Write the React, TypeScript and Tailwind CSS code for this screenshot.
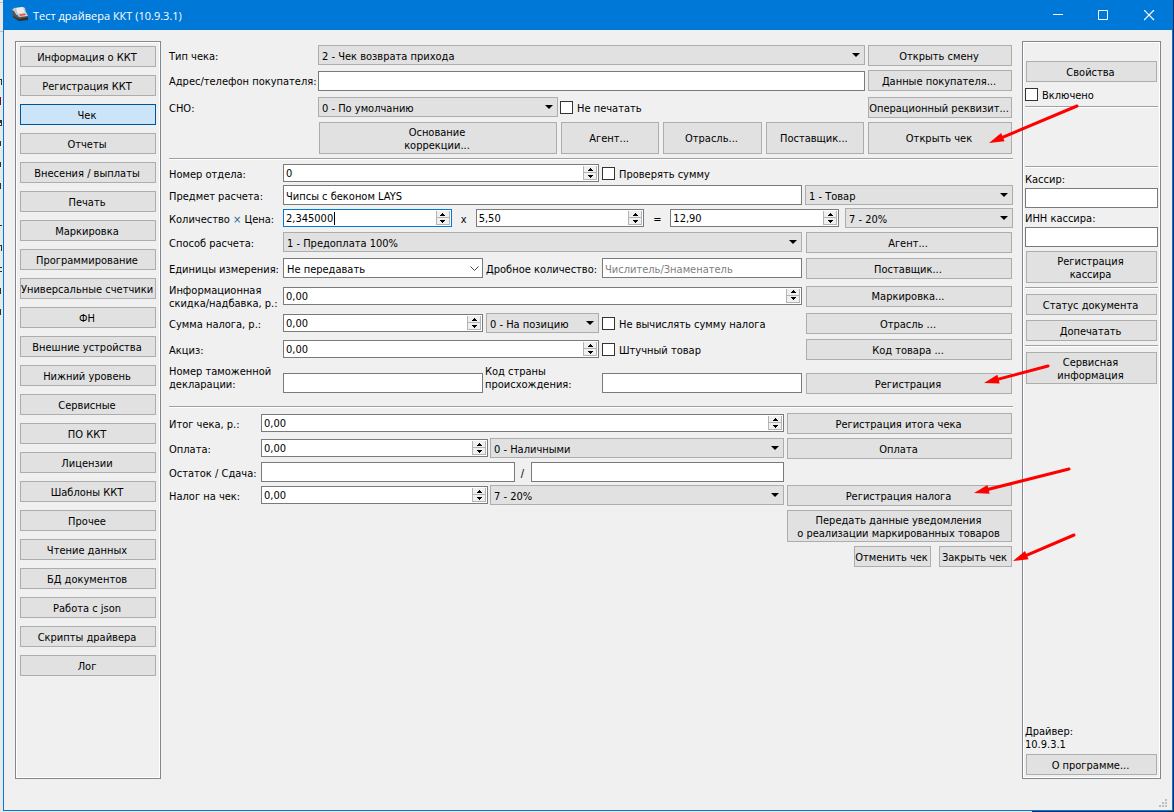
import { useId, useState } from "react";
import type { ReactNode } from "react";
import clsx from "clsx";

const sections = [
  "Информация о ККТ",
  "Регистрация ККТ",
  "Чек",
  "Отчеты",
  "Внесения / выплаты",
  "Печать",
  "Маркировка",
  "Программирование",
  "Универсальные счетчики",
  "ФН",
  "Внешние устройства",
  "Нижний уровень",
  "Сервисные",
  "ПО ККТ",
  "Лицензии",
  "Шаблоны ККТ",
  "Прочее",
  "Чтение данных",
  "БД документов",
  "Работа с json",
  "Скрипты драйвера",
  "Лог",
];

function Button({
  children,
  className,
  active,
  onClick,
}: {
  children: ReactNode;
  className?: string;
  active?: boolean;
  onClick?: () => void;
}) {
  return (
    <button
      type="button"
      onClick={onClick}
      className={clsx(
        "flex min-h-[21px] shrink-0 items-center justify-center border pt-px pr-0.5 text-center whitespace-nowrap",
        active
          ? "border-[#005499] bg-[#cce4f7]"
          : "border-[#adadad] bg-[#e1e1e1]",
        className,
      )}
    >
      {children}
    </button>
  );
}

function TextField({
  id,
  label,
  placeholder,
  value,
  className,
}: {
  id?: string;
  label?: string;
  placeholder?: string;
  value?: string;
  className?: string;
}) {
  return (
    <input
      id={id}
      type="text"
      aria-label={label}
      placeholder={placeholder}
      defaultValue={value}
      className={clsx(
        "h-5 min-w-0 border border-[#7a7a7a] bg-white px-0.5 pt-0.5 outline-none placeholder:text-[#808080]",
        className,
      )}
    />
  );
}

function Spin({
  id,
  label,
  value,
  className,
  focused,
}: {
  id?: string;
  label?: string;
  value: string;
  className?: string;
  focused?: boolean;
}) {
  return (
    <div
      className={clsx(
        "relative mt-px mb-0.5 flex h-[18px] min-w-0 border bg-white",
        focused ? "border-[#0078d7]" : "border-[#7a7a7a]",
        className,
      )}
    >
      <input
        id={id}
        type="text"
        aria-label={label}
        defaultValue={value}
        className="w-0 min-w-0 flex-1 bg-transparent px-0.5 pt-px outline-none"
      />
      {focused && (
        <span className="absolute top-0.5 left-[50px] h-[13px] w-px bg-black" />
      )}
      <div className="my-px mr-px flex w-[14px] flex-col border-r border-l border-[#b4b4b4] bg-[#f0f0f0]">
        <button
          type="button"
          aria-label="Больше"
          className="flex flex-1 items-center justify-center border-b border-[#b4b4b4]"
        >
          <svg width="5" height="3" shapeRendering="crispEdges">
            <path d="M2 0h1v1h1v1h1v1H0V2h1V1h1z" />
          </svg>
        </button>
        <button
          type="button"
          aria-label="Меньше"
          className="flex flex-1 items-center justify-center border-b border-[#b4b4b4]"
        >
          <svg width="5" height="3" shapeRendering="crispEdges">
            <path d="M0 0h5v1H4v1H3v1H2V2H1V1H0z" />
          </svg>
        </button>
      </div>
    </div>
  );
}

function Select({
  id,
  label,
  value,
  className,
  editable,
}: {
  id?: string;
  label?: string;
  value: string;
  className?: string;
  editable?: boolean;
}) {
  return (
    <div className={clsx("relative h-5 min-w-0", className)}>
      <select
        id={id}
        aria-label={label}
        className={clsx(
          "h-full w-full appearance-none border pt-0.5 pr-4 pl-[3px] outline-none",
          editable
            ? "border-[#7a7a7a] bg-white"
            : "border-[#adadad] bg-[#e1e1e1]",
        )}
      >
        <option>{value}</option>
      </select>
      {editable ? (
        <svg
          className="pointer-events-none absolute top-2 right-1"
          width="9"
          height="6"
          fill="none"
          stroke="#444"
        >
          <path d="M.5 .5l4 4 4-4" />
        </svg>
      ) : (
        <svg
          className="pointer-events-none absolute top-2 right-[5px]"
          width="8"
          height="4"
        >
          <path d="M0 0h8L4 4z" />
        </svg>
      )}
    </div>
  );
}

function Check({ label, className }: { label: string; className?: string }) {
  const id = useId();
  return (
    <div className={clsx("flex h-[21px] items-center", className)}>
      <input
        id={id}
        type="checkbox"
        className="size-[13px] shrink-0 appearance-none border border-[#333] bg-white checked:bg-[#0078d7]"
      />
      <label htmlFor={id} className="pt-px pl-1 whitespace-nowrap">
        {label}
      </label>
    </div>
  );
}

function Label({
  htmlFor,
  children,
  className,
}: {
  htmlFor: string;
  children: ReactNode;
  className?: string;
}) {
  return (
    <label
      htmlFor={htmlFor}
      className={clsx(
        "flex shrink-0 items-center self-stretch pt-0.5 whitespace-nowrap",
        className,
      )}
    >
      {children}
    </label>
  );
}

function Separator({ className }: { className?: string }) {
  return (
    <div
      className={clsx(
        "h-0.5 shrink-0 border-t border-b border-t-[#a0a0a0] border-b-white",
        className,
      )}
    />
  );
}

function Arrow({ from, to }: { from: [number, number]; to: [number, number] }) {
  const dx = to[0] - from[0];
  const dy = to[1] - from[1];
  const length = Math.hypot(dx, dy);
  const angle = (Math.atan2(dy, dx) * 180) / Math.PI;
  return (
    <g transform={`translate(${from[0]} ${from[1]}) rotate(${angle})`}>
      <path
        d={`M0 0H${length - 12}`}
        stroke="#f00"
        strokeWidth="3"
        strokeLinecap="round"
      />
      <path d={`M${length} 0l-15 -4.500v9z`} fill="#f00" />
    </g>
  );
}

function TitleBar() {
  return (
    <header className="flex h-[30px] shrink-0 items-center bg-[#0078d7] text-white">
      <svg className="ml-2 shrink-0" width="16" height="16" viewBox="0 0 16 16">
        <path d="M0 3l2-2 9-1 2 1 1 5-10 2z" fill="#c9c9c9" />
        <path d="M4 1l7-1 2 6-7 1z" fill="#ececec" />
        <path d="M0 3l2 1 3 5 10-1 1 1v4l-9 1-6-4z" fill="#555" />
        <path d="M5 7l9-2 2 4-9 1z" fill="#d4d4d4" />
        <path d="M7 7.500l6-1 1 1.500-6 1z" fill="#e05050" />
        <path d="M1 9l6 3v2l-6-4zM7 12l9-2v3l-9 1z" fill="#303030" />
      </svg>
      <h1 className="flex-1 pl-[5px] font-['Open_Sans','Noto_Sans',sans-serif] text-[11px]">
        Тест драйвера ККТ (10.9.3.1)
      </h1>
      <button
        type="button"
        aria-label="Свернуть"
        className="flex h-full w-[45px] items-center justify-center"
      >
        <svg width="11" height="11" stroke="#fff">
          <path d="M0 4.500h10" />
        </svg>
      </button>
      <button
        type="button"
        aria-label="Развернуть"
        className="flex h-full w-[45px] items-center justify-center"
      >
        <svg width="11" height="11" stroke="#fff" fill="none">
          <path d="M.5 .5h9v9h-9z" />
        </svg>
      </button>
      <button
        type="button"
        aria-label="Закрыть"
        className="flex h-full w-[46px] items-center justify-center"
      >
        <svg width="11" height="11" stroke="#fff" strokeWidth="1.2">
          <path d="M0 0l10 10M10 0L0 10" />
        </svg>
      </button>
    </header>
  );
}

function ReceiptForm() {
  return (
    <main className="flex min-w-0 flex-1 flex-col pt-1">
      <div className="flex items-start">
        <Label htmlFor="type" className="w-[149px]">
          Тип чека:
        </Label>
        <Select
          id="type"
          value="2 - Чек возврата прихода"
          className="flex-1"
        />
        <Button className="mr-px ml-[3px] w-[144px]">Открыть смену</Button>
      </div>
      <div className="mt-1 flex items-end">
        <Label htmlFor="address" className="w-[149px]">
          Адрес/телефон покупателя:
        </Label>
        <TextField id="address" className="flex-1" />
        <Button className="mr-px ml-[3px] w-[144px]">
          Данные покупателя...
        </Button>
      </div>
      <div className="mt-1.5 flex items-start">
        <Label htmlFor="tax-system" className="w-[149px]">
          СНО:
        </Label>
        <Select
          id="tax-system"
          value="0 - По умолчанию"
          className="w-[240px]"
        />
        <Check label="Не печатать" className="ml-0.5 flex-1" />
        <Button className="mr-px ml-[3px] w-[144px]">
          Операционный реквизит...
        </Button>
      </div>
      <div className="mt-1 flex h-8 items-stretch gap-1 pr-px pl-[150px]">
        <Button className="w-[238px]">
          Основание
          <br />
          коррекции...
        </Button>
        <Button className="flex-1">Агент...</Button>
        <Button className="flex-1">Отрасль...</Button>
        <Button className="flex-1">Поставщик...</Button>
        <Button className="w-[144px]">Открыть чек</Button>
      </div>

      <Separator className="mt-1" />

      <div className="mt-[3px] flex items-start">
        <Label htmlFor="department" className="w-[114px]">
          Номер отдела:
        </Label>
        <Spin id="department" value="0" className="w-[316px]" />
        <Check label="Проверять сумму" className="ml-[3px]" />
      </div>
      <div className="mt-px flex items-start">
        <Label htmlFor="item" className="w-[114px]">
          Предмет расчета:
        </Label>
        <TextField
          id="item"
          value="Чипсы с беконом LAYS"
          className="flex-1"
        />
        <Select
          label="Признак предмета расчета"
          value="1 - Товар"
          className="ml-[3px] w-[208px]"
        />
      </div>
      <div className="mt-[3px] flex items-start">
        <Label htmlFor="quantity" className="w-[114px]">
          <span>
            Количество <span className="text-[#1a6a9a]">×</span> Цена:
          </span>
        </Label>
        <Spin id="quantity" value="2,345000" className="flex-1" focused />
        <span className="w-6 pt-[5px] text-center">x</span>
        <Spin label="Цена" value="5,50" className="flex-1" />
        <span className="w-[26px] pt-[5px] text-center">=</span>
        <Spin label="Сумма" value="12,90" className="flex-1" />
        <Select
          label="Ставка налога"
          value="7 - 20%"
          className="ml-1.5 w-[168px]"
        />
      </div>
      <div className="mt-[3px] flex items-start">
        <Label htmlFor="method" className="w-[114px]">
          Способ расчета:
        </Label>
        <Select id="method" value="1 - Предоплата 100%" className="flex-1" />
        <Button className="mr-px ml-1 w-[206px]">Агент...</Button>
      </div>
      <div className="mt-[5px] flex items-start">
        <Label htmlFor="units" className="w-[114px]">
          Единицы измерения:
        </Label>
        <Select
          id="units"
          value="Не передавать"
          className="flex-1"
          editable
        />
        <Label htmlFor="fraction" className="w-[119px] pl-[3px]">
          Дробное количество:
        </Label>
        <div className="flex flex-1">
          <TextField
            id="fraction"
            placeholder="Числитель/Знаменатель"
            className="w-full"
          />
        </div>
        <Button className="mr-px ml-1 w-[206px]">Поставщик...</Button>
      </div>
      <div className="mt-1 flex h-[26px] items-center">
        <Label htmlFor="discount" className="w-[114px]">
          Информационная
          <br />
          скидка/надбавка, р.:
        </Label>
        <Spin id="discount" value="0,00" className="flex-1" />
        <Button className="mr-px ml-1 w-[206px]">Маркировка...</Button>
      </div>
      <div className="mt-1 flex items-start">
        <Label htmlFor="tax-sum" className="w-[114px]">
          Сумма налога, р.:
        </Label>
        <div className="flex flex-1">
          <Spin id="tax-sum" value="0,00" className="flex-1" />
        </div>
        <Select
          label="Способ начисления налога"
          value="0 - На позицию"
          className="mr-[3px] ml-[3px] w-[113px]"
        />
        <Check label="Не вычислять сумму налога" className="w-0 flex-1" />
        <Button className="mr-px ml-1 w-[206px]">Отрасль ...</Button>
      </div>
      <div className="mt-[5px] flex items-start">
        <Label htmlFor="excise" className="w-[114px]">
          Акциз:
        </Label>
        <Spin id="excise" value="0,00" className="w-[316px]" />
        <Check label="Штучный товар" className="ml-[3px] flex-1" />
        <Button className="mr-px ml-1 w-[206px]">Код товара ...</Button>
      </div>
      <div className="mt-[3px] flex items-end">
        <Label htmlFor="customs" className="mb-[3px] w-[114px]">
          Номер таможенной
          <br />
          декларации:
        </Label>
        <TextField id="customs" className="mb-px w-0 flex-1" />
        <Label htmlFor="country" className="mb-[3px] w-[119px] pl-0.5">
          Код страны
          <br />
          происхождения:
        </Label>
        <TextField id="country" className="mb-px w-0 flex-1" />
        <Button className="mt-2 mr-px ml-1 w-[206px]">Регистрация</Button>
      </div>

      <Separator className="mt-3" />

      <div className="mt-[5px] flex items-start">
        <Label htmlFor="total" className="w-[92px]">
          Итог чека, р.:
        </Label>
        <Spin id="total" value="0,00" className="flex-1" />
        <Button className="mr-px ml-[3px] w-[225px]">
          Регистрация итога чека
        </Button>
      </div>
      <div className="mt-1 flex items-start">
        <Label htmlFor="payment" className="w-[92px]">
          Оплата:
        </Label>
        <Spin id="payment" value="0,00" className="w-[227px]" />
        <Select
          label="Способ оплаты"
          value="0 - Наличными"
          className="ml-0.5 flex-1"
        />
        <Button className="mr-px ml-[3px] w-[225px]">Оплата</Button>
      </div>
      <div className="mt-[3px] flex items-start pr-[229px]">
        <Label htmlFor="rest" className="w-[92px]">
          Остаток / Сдача:
        </Label>
        <TextField id="rest" className="w-0 flex-1" />
        <span className="w-4 pt-[5px] text-center">/</span>
        <TextField label="Сдача" className="w-0 flex-1" />
      </div>
      <div className="mt-[3px] flex items-start">
        <Label htmlFor="receipt-tax" className="w-[92px]">
          Налог на чек:
        </Label>
        <Spin id="receipt-tax" value="0,00" className="w-[227px]" />
        <Select
          label="Ставка налога на чек"
          value="7 - 20%"
          className="ml-0.5 flex-1"
        />
        <Button className="mr-px ml-[3px] w-[225px]">
          Регистрация налога
        </Button>
      </div>
      <Button className="mt-1 mr-px h-8 w-[225px] self-end">
        Передать данные уведомления
        <br />
        о реализации маркированных товаров
      </Button>
      <div className="mt-1 mr-px flex justify-end gap-2">
        <Button className="w-[77px]">Отменить чек</Button>
        <Button className="w-[73px]">Закрыть чек</Button>
      </div>
    </main>
  );
}

function DriverPanel() {
  return (
    <aside className="flex w-[139px] shrink-0 flex-col border border-[#828790] px-0.5 pt-[19px] pb-[3px] shadow-[inset_0_0_0_1px_#fff]">
      <Button className="mx-px">Свойства</Button>
      <Check label="Включено" className="mt-0.5" />
      <Separator className="mt-px" />
      <Separator className="mt-[58px]" />
      <label htmlFor="cashier" className="mt-[5px] mb-0.5">
        Кассир:
      </label>
      <TextField id="cashier" />
      <label htmlFor="cashier-inn" className="mt-1 mb-0.5">
        ИНН кассира:
      </label>
      <TextField id="cashier-inn" />
      <Button className="mx-px mt-1 h-8">
        Регистрация
        <br />
        кассира
      </Button>
      <Separator className="mt-1" />
      <Button className="mx-px mt-[5px]">Статус документа</Button>
      <Button className="mx-px mt-[5px]">Допечатать</Button>
      <Separator className="mt-1" />
      <Button className="mx-px mt-[5px] h-8">
        Сервисная
        <br />
        информация
      </Button>
      <p className="mt-auto mb-[3px]">
        Драйвер:
        <br />
        10.9.3.1
      </p>
      <Button className="mx-px">О программе...</Button>
    </aside>
  );
}

export default function App() {
  const [section, setSection] = useState("Чек");

  return (
    <div className="relative flex min-h-screen bg-[#e6e8ea] pr-px pb-px pl-[3px] font-['DejaVu_Sans_Condensed','DejaVu_Sans',sans-serif] text-[11px] leading-[13px] text-black">
      <div className="flex min-w-0 flex-1 flex-col border-r border-b border-l border-[#0078d7] bg-[#f0f0f0]">
        <TitleBar />
        <div className="relative flex flex-1 px-[11px] pt-[11px] pb-[31px]">
          <nav className="mr-2 flex w-[146px] shrink-0 flex-col gap-2 border border-[#828790] p-1 shadow-[inset_0_0_0_1px_#fff]">
            {sections.map((name) => (
              <Button
                key={name}
                active={name === section}
                onClick={() => setSection(name)}
              >
                {name}
              </Button>
            ))}
          </nav>
          <ReceiptForm />
          <div className="w-[9px] shrink-0" />
          <DriverPanel />
          <svg
            className="absolute right-1 bottom-0.5"
            width="9"
            height="9"
            fill="#bfbfbf"
          >
            <path d="M6 0h2v2H6zM3 3h2v2H3zM6 3h2v2H6zM0 6h2v2H0zM3 6h2v2H3zM6 6h2v2H6z" />
          </svg>
        </div>
      </div>
      <svg
        className="pointer-events-none absolute top-0 left-0"
        width="1174"
        height="812"
      >
        {/* slivers of the window behind, left edge */}
        <path
          d="M0 79h2v6H1v-5H0zM0 120h2v6H0v-1h1v-2H0zM0 141h1v5H0zM0 162h1v5H0zM0 183h1v6H0zM0 225h2v1H0zM0 245h2v6H1v-5H0zM0 267h2v1H0v3h2v1H0zM0 288h1v6H0zM0 309h1v6H0z"
          fill="#333"
        />
        <path d="M0 97h1v8H0z" fill="#7a1030" />
        <path d="M0 2h3v1H0zM0 31h3v1H0z" fill="#bbb" />
        <Arrow from={[1077, 106]} to={[989, 143]} />
        <Arrow from={[1048, 366]} to={[984, 383]} />
        <Arrow from={[1069, 469]} to={[974, 493]} />
        <Arrow from={[1074, 535]} to={[1013, 561]} />
        <path d="M1173 0h1v812h-142v-1h141z" fill="#0a2a5e" />
      </svg>
    </div>
  );
}
